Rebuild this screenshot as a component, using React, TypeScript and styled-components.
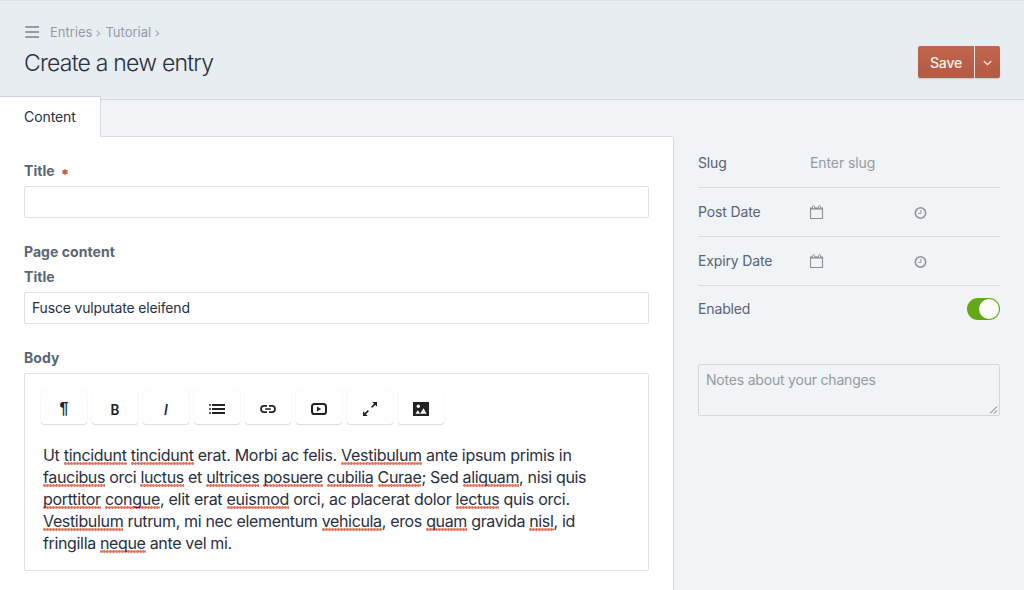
import React from "react";
import styled, { createGlobalStyle } from "styled-components";

const GlobalStyle = createGlobalStyle`
  * { box-sizing: border-box; }
  body {
    margin: 0;
    background: #f0f4f7;
    color: #29323d;
    font-family: Inter, "Liberation Sans", sans-serif;
    font-size: 14px;
    line-height: 20px;
    overflow: hidden;
  }
`;

const Page = styled.div`
  height: 590px;
  display: flex;
  flex-direction: column;
  overflow: hidden;
`;

const Header = styled.header`
  flex: none;
  height: 100px;
  padding: 21px 24px 0;
  background: #e8edf1;
  border-top: 1px solid #dfe2e5;
  border-bottom: 1px solid #d3d9df;
  display: flex;
  justify-content: space-between;
`;

const Crumbs = styled.nav`
  display: flex;
  align-items: center;
  height: 20px;
  color: #949aa8;
  font-size: 13px;
  svg { display: block; }
  span + svg { margin-top: 2px; }
`;

const Crumb = styled.span`
  letter-spacing: 0;
`;

const Heading = styled.h1`
  margin: 6px 0 0;
  font-size: 23px;
  line-height: 30px;
  font-weight: 350;
  letter-spacing: -0.78px;
  color: #29303e;
  white-space: nowrap;
`;

const ButtonGroup = styled.div`
  display: flex;
  gap: 1px;
  height: 32px;
  margin-top: 24px;
`;

const SubmitButton = styled.button<{ $side: "left" | "right" }>`
  width: ${(p) => (p.$side === "left" ? 56 : 25)}px;
  height: 32px;
  padding: 2px 0 0;
  border: 0;
  border-radius: ${(p) => (p.$side === "left" ? "2px 0 0 2px" : "0 2px 2px 0")};
  background: linear-gradient(#c1654b, #b15c44);
  box-shadow: 0 1px 1px rgba(40, 50, 65, 0.18);
  color: #fcefea;
  font: 500 14px/30px Inter, sans-serif;
  letter-spacing: -0.15px;
  display: flex;
  align-items: center;
  justify-content: center;
`;

const Columns = styled.div`
  flex: 1;
  display: flex;
  min-height: 0;
`;

const Main = styled.main`
  width: 674px;
  display: flex;
  flex-direction: column;
  margin-top: -4px;
`;

const Tab = styled.div`
  flex: none;
  width: 101px;
  height: 41px;
  margin-bottom: -1px;
  padding: 10px 0 0 24px;
  background: #fff;
  border-top: 1px solid #cdd5e0;
  border-right: 1px solid #d3d9df;
  color: #29303e;
  letter-spacing: -0.08px;
  z-index: 1;
`;

const Panel = styled.section`
  flex: 1;
  padding: 24px 24px 0;
  background: #fff;
  border-top: 1px solid #dadfe4;
  border-right: 1px solid #d5d9dd;
  border-top-right-radius: 2px;
`;

const Label = styled.div`
  display: flex;
  align-items: center;
  height: 20px;
  margin-bottom: 5px;
  color: #596673;
  font-weight: 700;
  letter-spacing: 0.05px;
  svg { margin: 2px 0 0 7px; }
`;

const TextField = styled.div`
  height: 32px;
  margin-bottom: 24px;
  padding: 5px 7px;
  border: 1px solid #dfe1e4;
  border-radius: 2px;
  color: #29303e;
  letter-spacing: -0.17px;
`;

const Editor = styled.div`
  height: 198px;
  padding: 17px 16px 0;
  border: 1px solid #dfe1e4;
  border-radius: 2px;
`;

const Toolbar = styled.div`
  display: flex;
  gap: 5px;
  margin-bottom: 20px;
`;

const Tool = styled.button<{ $font?: string }>`
  width: 46px;
  height: 33px;
  padding: 3px 0 0;
  border: 0;
  border-radius: 3px;
  background: #fff;
  box-shadow: 0 0 1px rgba(0, 0, 0, 0.14), 0 1px 1px rgba(0, 0, 0, 0.13);
  display: flex;
  align-items: center;
  justify-content: center;
  color: #222;
  font: ${(p) => p.$font ?? "600 14px/18px Roboto, sans-serif"};
`;

const Glyph = styled.span`
  padding-top: 1px;
`;

const Line = styled.div<{ $spacing: number }>`
  padding-left: 2px;
  height: 22px;
  font-size: 16px;
  line-height: 22px;
  color: #29303e;
  white-space: nowrap;
  letter-spacing: ${(p) => p.$spacing}px;
`;

const Misspelled = styled.span`
  padding-bottom: 2px;
  background: radial-gradient(circle at 1.5px 1.5px, #e2755d 1px, rgba(226, 117, 93, 0.15) 1.7px) 0 17px / 3px 3px repeat-x;
`;

const Sidebar = styled.aside`
  flex: 1;
  padding: 39px 24px 0;
`;

const MetaRow = styled.div<{ $last?: boolean }>`
  height: ${(p) => (p.$last ? 46 : 49)}px;
  display: flex;
  align-items: center;
  border-bottom: ${(p) => (p.$last ? "0" : "1px solid #d6dbe0")};
  color: #596373;
`;

const MetaLabel = styled.span`
  width: 112px;
  letter-spacing: -0.14px;
`;

const Placeholder = styled.span<{ $spacing: number }>`
  color: #969b9f;
  letter-spacing: ${(p) => p.$spacing}px;
`;

const DateCell = styled.span`
  width: 104px;
  height: 16px;
  margin-top: 2px;
  svg { display: block; }
`;

const TimeCell = styled.span`
  height: 16px;
  margin-top: 2px;
  svg { display: block; }
`;

const Switch = styled.div`
  width: 33px;
  height: 22px;
  margin-left: auto;
  padding: 1px;
  border-radius: 11px;
  background: #62a915;
  display: flex;
  justify-content: flex-end;
`;

const Knob = styled.span`
  width: 20px;
  height: 20px;
  border-radius: 50%;
  background: #fbfcfb;
`;

const Notes = styled.div`
  display: flex;
  justify-content: space-between;
  height: 52px;
  margin-top: 32px;
  padding: 5px 0 0 7px;
  border: 1px solid #d4d9de;
  border-radius: 2px;
  svg { align-self: flex-end; }
`;

const Chevron = ({ before, after }: { before: number; after: number }) => (
  <svg width={5 + before + after} height="8" viewBox={`${-before} 0 ${5 + before + after} 8`} fill="none" stroke="#a3a8b3" strokeWidth="1.1">
    <path d="M.8 1.6 3.6 4.4.8 7.2" />
  </svg>
);

const CalendarIcon = () => (
  <svg width="14" height="16" viewBox="0 0 14 16" fill="none" stroke="#8b8f93">
    <path d="M.5 4v9.5h12V4" strokeWidth="1.1" />
    <path d="M0 3.5h13" strokeWidth="2" />
    <rect x="2.5" y=".7" width="2" height="3.3" rx="1" fill="#f0f4f7" strokeWidth=".9" />
    <rect x="8.5" y=".7" width="2" height="3.3" rx="1" fill="#f0f4f7" strokeWidth=".9" />
  </svg>
);

const ClockIcon = () => (
  <svg width="13" height="16" viewBox="0 0 13 16" fill="none" stroke="#909498">
    <circle cx="6.5" cy="8" r="5.2" strokeWidth="1.6" />
    <path d="M6.9 5v3.4H4.2" strokeWidth="1" />
  </svg>
);

const BulletListIcon = () => (
  <svg width="16" height="12" viewBox="0 0 16 12" fill="#222">
    <path d="M3 1h13v2H3zM3 5h13v2H3zM3 9h13v2H3z" />
    <path d="M0 1h2v2H0zM0 5h2v2H0zM0 9h2v2H0z" opacity=".75" />
  </svg>
);

const LinkIcon = () => (
  <svg width="16" height="10" viewBox="0 0 16 10" fill="none" stroke="#222" strokeWidth="1.7">
    <path d="M7 1.8H4.2a3.2 3.2 0 0 0 0 6.4H7M9 1.8h2.8a3.2 3.2 0 0 1 0 6.4H9M5.2 5h5.6" />
  </svg>
);

const VideoIcon = () => (
  <svg width="16" height="12" viewBox="0 0 16 12">
    <rect x="1" y="1" width="14" height="10" rx="2.6" fill="none" stroke="#222" strokeWidth="2" />
    <path d="M6 3.6v4.8L10.2 6z" fill="#222" />
  </svg>
);

const ExpandIcon = () => (
  <svg width="14" height="14" viewBox="0 0 14 14" fill="none" stroke="#222" strokeWidth="1.5">
    <path d="M8.6 5.4 12.6 1.4M5.4 8.6 1.4 12.6" />
    <path d="M9.2 0H14v4.8zM0 9.2V14h4.8z" fill="#222" stroke="none" />
  </svg>
);

const ImageIcon = () => (
  <svg width="16" height="14" viewBox="0 0 16 14">
    <path d="M0 0h16v14H0z" fill="#222" />
    <circle cx="5.3" cy="4.3" r="1.7" fill="#fff" />
    <path d="M2.5 11.7 4.7 8.2 6.3 10.2 7 11.7zM7 11.7 10.5 6.3 13.7 11.7z" fill="#fff" />
  </svg>
);

const paragraph: { spacing: number; text: string }[] = [
  { spacing: -0.3, text: "Ut [tincidunt] [tincidunt] erat. Morbi ac felis. [Vestibulum] ante ipsum primis in" },
  { spacing: -0.345, text: "[faucibus] orci [luctus] et [ultrices] [posuere] [cubilia] [Curae]; Sed [aliquam], nisi quis" },
  { spacing: -0.29, text: "[porttitor] [congue], elit erat [euismod] orci, ac placerat dolor [lectus] quis orci." },
  { spacing: -0.34, text: "[Vestibulum] rutrum, mi nec elementum [vehicula], eros [quam] gravida [nisl], id" },
  { spacing: -0.35, text: "fringilla [neque] ante vel mi." },
];

const marked = (text: string) =>
  text.split(/(\[[^\]]+\])/).map((part, i) =>
    part.startsWith("[") ? <Misspelled key={i}>{part.slice(1, -1)}</Misspelled> : part
  );

export default function App() {
  return (
    <Page>
      <GlobalStyle />
      <Header>
        <div>
          <Crumbs>
            <svg width="26" height="12" viewBox="0 0 26 12" stroke="#949aa8" strokeWidth="2" strokeLinecap="round">
              <path d="M2 1h12.2M2 6h12.2M2 11h12.2" />
            </svg>
            <Crumb>Entries</Crumb>
            <Chevron before={4} after={4} />
            <Crumb>Tutorial</Crumb>
            <Chevron before={4} after={0} />
          </Crumbs>
          <Heading>Create a new entry</Heading>
        </div>
        <ButtonGroup>
          <SubmitButton $side="left">Save</SubmitButton>
          <SubmitButton $side="right">
            <svg width="9" height="6" viewBox="0 0 9 6" fill="none" stroke="#fcefea" strokeWidth="1.2">
              <path d="M.8 1 4.5 4.6 8.2 1" />
            </svg>
          </SubmitButton>
        </ButtonGroup>
      </Header>
      <Columns>
        <Main>
          <Tab>Content</Tab>
          <Panel>
            <Label>
              Title
              <svg width="6" height="6" viewBox="0 0 6 6" stroke="#cf5b42" strokeWidth="1.5">
                <path d="M3 .2v5.6M.4 1.5l5.2 3M5.6 1.5l-5.2 3" />
              </svg>
            </Label>
            <TextField />
            <Label>Page content</Label>
            <Label>Title</Label>
            <TextField>Fusce vulputate eleifend</TextField>
            <Label>Body</Label>
            <Editor>
              <Toolbar>
                <Tool $font={'700 16px/20px "Liberation Sans", sans-serif'}>¶</Tool>
                <Tool><Glyph>B</Glyph></Tool>
                <Tool $font="500 14px/18px Roboto, sans-serif"><Glyph><i>I</i></Glyph></Tool>
                <Tool><BulletListIcon /></Tool>
                <Tool><LinkIcon /></Tool>
                <Tool><VideoIcon /></Tool>
                <Tool><ExpandIcon /></Tool>
                <Tool><ImageIcon /></Tool>
              </Toolbar>
              {paragraph.map((line) => (
                <Line key={line.text} $spacing={line.spacing}>{marked(line.text)}</Line>
              ))}
            </Editor>
          </Panel>
        </Main>
        <Sidebar>
          <MetaRow>
            <MetaLabel>Slug</MetaLabel>
            <Placeholder $spacing={-0.1}>Enter slug</Placeholder>
          </MetaRow>
          <MetaRow>
            <MetaLabel>Post Date</MetaLabel>
            <DateCell><CalendarIcon /></DateCell>
            <TimeCell><ClockIcon /></TimeCell>
          </MetaRow>
          <MetaRow>
            <MetaLabel>Expiry Date</MetaLabel>
            <DateCell><CalendarIcon /></DateCell>
            <TimeCell><ClockIcon /></TimeCell>
          </MetaRow>
          <MetaRow $last>
            <MetaLabel>Enabled</MetaLabel>
            <Switch><Knob /></Switch>
          </MetaRow>
          <Notes>
            <Placeholder $spacing={-0.2}>Notes about your changes</Placeholder>
            <svg width="9" height="9" viewBox="0 0 9 9" stroke="#555b60" strokeWidth=".9">
              <path d="M0 7.5 7 .5M4 7.5 7 4.5" />
            </svg>
          </Notes>
        </Sidebar>
      </Columns>
    </Page>
  );
}
